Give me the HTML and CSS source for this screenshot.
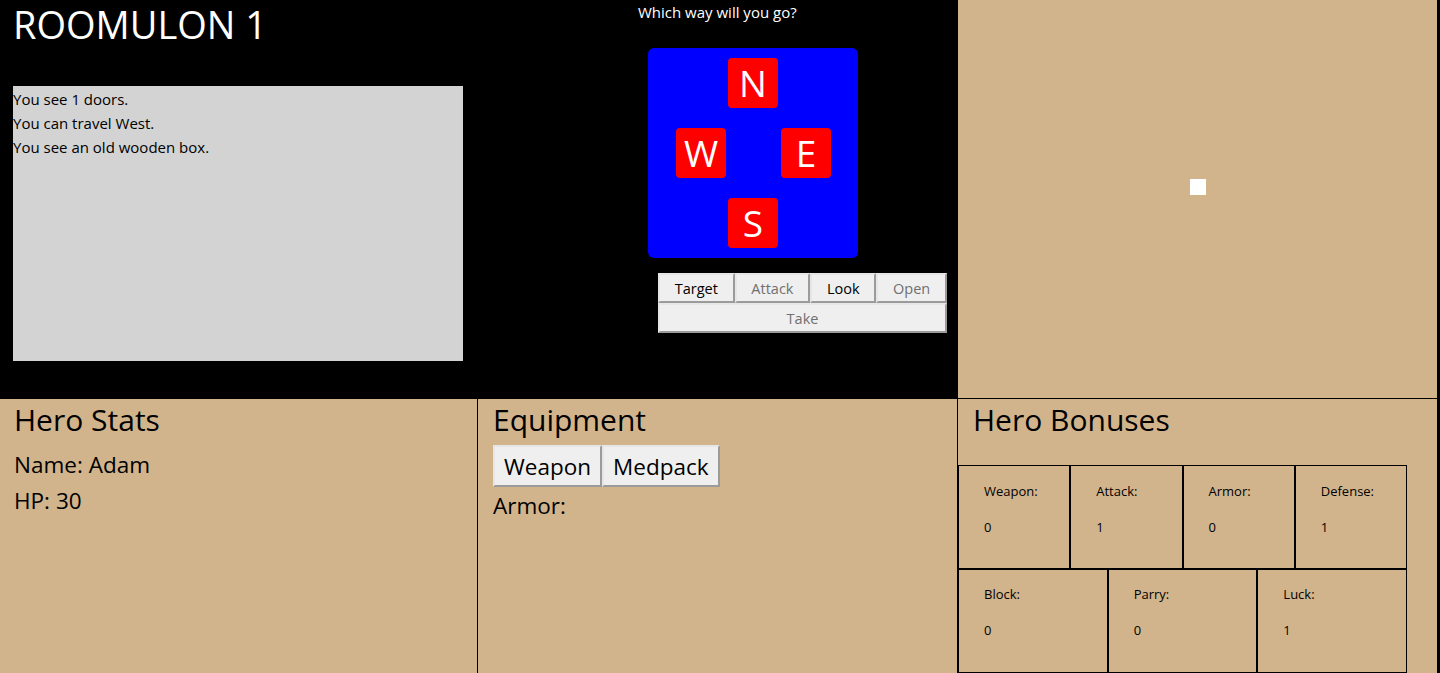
FILE: index.html
```html
<!DOCTYPE html>
<html lang="en">
<head>
<meta charset="utf-8">
<title>ROOMULON</title>
<link rel="stylesheet" href="styles.css">
</head>
<body>
<div class="page">
  <div class="top">
    <section class="room">
      <h1 class="room-title">ROOMULON 1</h1>
      <div class="log">
        <p>You see 1 doors.</p>
        <p>You can travel West.</p>
        <p>You see an old wooden box.</p>
      </div>
    </section>
    <section class="nav">
      <p class="prompt">Which way will you go?</p>
      <div class="compass">
        <button class="dir dir-n">N</button>
        <button class="dir dir-w">W</button>
        <button class="dir dir-e">E</button>
        <button class="dir dir-s">S</button>
      </div>
      <div class="actions">
        <div class="action-row">
          <button class="act">Target</button>
          <button class="act" disabled>Attack</button>
          <button class="act">Look</button>
          <button class="act" disabled>Open</button>
        </div>
        <button class="act act-wide" disabled>Take</button>
      </div>
    </section>
    <section class="map">
      <div class="marker"></div>
    </section>
  </div>
  <div class="bottom">
    <section class="panel panel-stats">
      <h2 class="panel-title">Hero Stats</h2>
      <p class="stat-line stat-first">Name: Adam</p>
      <p class="stat-line">HP: 30</p>
    </section>
    <section class="panel panel-equip">
      <h2 class="panel-title">Equipment</h2>
      <div class="equip-row">
        <button class="equip-btn">Weapon</button>
        <button class="equip-btn">Medpack</button>
      </div>
      <p class="stat-line armor">Armor:</p>
    </section>
    <section class="panel panel-bonus">
      <h2 class="panel-title">Hero Bonuses</h2>
      <div class="bonus-grid">
        <div class="bonus-row">
          <div class="cell"><p class="cell-label">Weapon:</p><p class="cell-value">0</p></div>
          <div class="cell"><p class="cell-label">Attack:</p><p class="cell-value">1</p></div>
          <div class="cell"><p class="cell-label">Armor:</p><p class="cell-value">0</p></div>
          <div class="cell"><p class="cell-label">Defense:</p><p class="cell-value">1</p></div>
        </div>
        <div class="bonus-row">
          <div class="cell"><p class="cell-label">Block:</p><p class="cell-value">0</p></div>
          <div class="cell"><p class="cell-label">Parry:</p><p class="cell-value">0</p></div>
          <div class="cell"><p class="cell-label">Luck:</p><p class="cell-value">1</p></div>
        </div>
      </div>
    </section>
  </div>
</div>
</body>
</html>
```
FILE: styles.css
```css
* { box-sizing: border-box; }

html, body {
  margin: 0;
  padding: 0;
  background: #000;
  font-family: "Open Sans", "Noto Sans", sans-serif;
  color: #000;
}

p { margin: 0; }

button {
  font-family: "Open Sans", "Noto Sans", sans-serif;
}

.page {
  width: 1438px;
}

.top {
  display: grid;
  grid-template-columns: 478px 480px 479px;
  height: 398px;
}

/* ---------- room ---------- */
.room {
  padding: 4px 0 0 13px;
}

.room-title {
  margin: 0;
  font-size: 38px;
  line-height: 40px;
  font-weight: 400;
  color: #fff;
}

.log {
  margin-top: 42px;
  width: 450px;
  height: 275px;
  background: #d3d3d3;
  padding-top: 1px;
  font-size: 15px;
  line-height: 24px;
}

/* ---------- navigation ---------- */
.nav {
  padding-top: 2px;
}

.prompt {
  margin-left: 160px;
  font-size: 15px;
  line-height: 20px;
  color: #fff;
}

.compass {
  margin: 26px 0 0 170px;
  width: 210px;
  height: 210px;
  background: #0000ff;
  border-radius: 6px;
  padding: 10px 0 10px 28px;
  display: grid;
  grid-template-columns: 50px 50px 50px;
  grid-template-rows: 50px 50px 50px;
  column-gap: 2px;
  row-gap: 20px;
}

.dir {
  width: 50px;
  height: 50px;
  border: none;
  border-radius: 4px;
  background: #ff0000;
  color: #fff;
  font-size: 37px;
  line-height: 50px;
  padding: 0;
  display: flex;
  align-items: center;
  justify-content: center;
}

.dir-n { grid-column: 2; grid-row: 1; }
.dir-w { grid-column: 1; grid-row: 2; }
.dir-e { grid-column: 3; grid-row: 2; margin-left: 1px; }
.dir-s { grid-column: 2; grid-row: 3; }

.actions {
  margin: 15px 0 0 180px;
  width: 289px;
  display: flex;
  flex-direction: column;
}

.action-row {
  display: flex;
}

.act {
  flex: 1 1 auto;
  height: 30px;
  padding: 2px 14px 0;
  background: #efefef;
  border: 2px solid;
  border-color: #e6e6e6 #9b9b9b #9b9b9b #e6e6e6;
  font-size: 14.5px;
  line-height: 24px;
  color: #000;
}

.act:disabled {
  color: #707070;
}

.act-wide {
  width: 100%;
}

/* ---------- map ---------- */
.map {
  background: #d2b48c;
  display: flex;
  flex-direction: column;
  align-items: center;
  padding-top: 179px;
}

.marker {
  width: 16px;
  height: 16px;
  background: #fff;
}

/* ---------- bottom panels ---------- */
.bottom {
  display: grid;
  grid-template-columns: 478px 480px 480px;
}

.panel {
  background: #d2b48c;
  border-top: 1px solid #000;
  border-right: 1px solid #000;
  padding-top: 3px;
  min-height: 290px;
}

.panel-title {
  margin: 0;
  padding-left: 14px;
  font-size: 30px;
  line-height: 36px;
  font-weight: 400;
}

.panel-equip .panel-title,
.panel-bonus .panel-title {
  padding-left: 15px;
}

.stat-line {
  padding-left: 14px;
  font-size: 22.5px;
  line-height: 36px;
}

.stat-first {
  margin-top: 9px;
}

.equip-row {
  display: flex;
  margin: 7px 0 0 15px;
}

.equip-btn {
  height: 42px;
  padding: 1px 9px 0;
  background: #efefef;
  border: 2px solid;
  border-color: #e6e6e6 #9b9b9b #9b9b9b #e6e6e6;
  font-size: 22.5px;
  line-height: 36px;
  color: #000;
}

.armor {
  padding-left: 15px;
  margin-top: 1px;
}

.bonus-grid {
  margin-top: 27px;
  width: 449px;
}

.bonus-row {
  display: flex;
}

.cell {
  flex: 1 1 0;
  border: 1px solid #000;
  padding: 16px 0 32px 25px;
  font-size: 13px;
  line-height: 18px;
}

.bonus-row + .bonus-row .cell {
  padding-top: 15px;
  padding-bottom: 33px;
}

.cell-value {
  margin-top: 18px;
}
```
